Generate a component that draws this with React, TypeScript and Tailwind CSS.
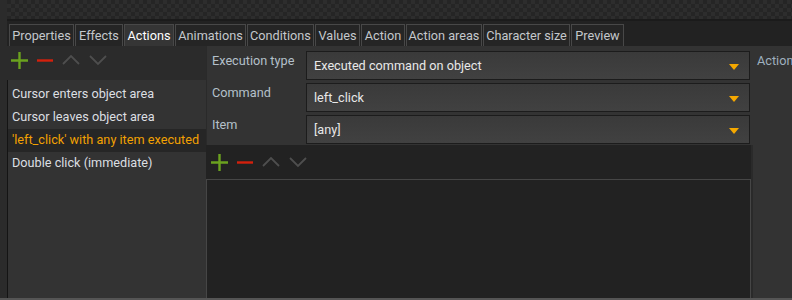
import React from "react";

const tabs = [
  { label: "Properties", w: "w-[65px]" },
  { label: "Effects", w: "w-[48px]" },
  { label: "Actions", w: "w-[50px]", active: true },
  { label: "Animations", w: "w-[71px]" },
  { label: "Conditions", w: "w-[67px]" },
  { label: "Values", w: "w-[45px]" },
  { label: "Action", w: "w-[44px]" },
  { label: "Action areas", w: "w-[76px]" },
  { label: "Character size", w: "w-[87px]" },
  { label: "Preview", w: "w-[53px]" },
];

const events = [
  "Cursor enters object area",
  "Cursor leaves object area",
  "'left_click' with any item executed",
  "Double click (immediate)",
];

const fields = [
  { label: "Execution type", value: "Executed command on object" },
  { label: "Command", value: "left_click" },
  { label: "Item", value: "[any]" },
];

function Toolbar() {
  return (
    <div className="flex items-center gap-[9px]">
      <svg width="17" height="17" viewBox="0 0 17 17">
        <path d="M8.5 0v17M0 8.5h17" stroke="#6ba21f" strokeWidth="2.4" />
      </svg>
      <svg width="16" height="17" viewBox="0 0 16 17">
        <path d="M0 8.5h16" stroke="#d4200c" strokeWidth="2.4" />
      </svg>
      <svg width="18" height="17" viewBox="0 0 18 17">
        <path d="M1 12l8-8 8 8" stroke="#4e4e4e" strokeWidth="1.8" fill="none" />
      </svg>
      <svg width="18" height="17" viewBox="0 0 18 17">
        <path d="M1 4l8 8 8-8" stroke="#4e4e4e" strokeWidth="1.8" fill="none" />
      </svg>
    </div>
  );
}

export default function App() {
  return (
    <div
      className="w-[792px] h-[300px] bg-[#2b2b2b] flex flex-col overflow-hidden text-[12.7px] leading-none"
      style={{ fontFamily: "Roboto, 'Liberation Sans', sans-serif" }}
    >
      <div className="h-[19px] ml-[7px] shrink-0 bg-[image:repeating-conic-gradient(#2d2d2d_0_25%,#252525_0_50%)] bg-size-[8px_8px]" />

      <div className="flex-1 flex flex-col pl-[7px] border-b-2 border-[#555]">
        {/* tabs */}
        <div className="h-[27px] bg-[#222] flex items-end gap-[1px] pl-[2px] pt-[4px] shrink-0 border-t-2 border-[#1b1b1b]">
          {tabs.map(t => (
            <div
              key={t.label}
              className={`${t.w} h-[22px] pt-[2px] flex items-center justify-center border border-b-0 border-[#484848] ${
                t.active ? "bg-[#353535] text-white" : "bg-[#252525] text-[#c4c8cc]"
              }`}
            >
              {t.label}
            </div>
          ))}
        </div>

        <div className="flex-1 flex min-h-0">
          {/* events list */}
          <div className="w-[199px] flex flex-col shrink-0">
            <div className="h-[34px] bg-[#2b2b2b] flex items-start pt-[6px] pl-[4px] shrink-0">
              <Toolbar />
            </div>
            <div className="flex-1 bg-[#333] border-l border-[#141414] pt-[3px]">
              {events.map((e, i) => (
                <div
                  key={e}
                  className={`h-[23px] flex items-center pl-[4px] whitespace-nowrap ${
                    i === 2 ? "bg-[#262626] text-[#f2a102]" : "text-[#dcdfe2]"
                  }`}
                >
                  {e}
                </div>
              ))}
            </div>
          </div>

          {/* action editor */}
          <div className="w-[547px] flex flex-col shrink-0 bg-[#2a2a2a]">
            <div className="flex flex-col gap-[3px] pt-[5px] pb-[1px] pr-[3px] bg-[#333] ml-[1px]">
              {fields.map(f => (
                <div key={f.label} className="flex h-[29px]">
                  <div className="w-[99px] pl-[5px] pt-[4px] text-[#b4c0ca] shrink-0">{f.label}</div>
                  <div className="flex-1 flex items-center justify-between pl-[7px] pr-[10px] pt-[2px] border border-[#1c1c1c] bg-[linear-gradient(#3a3a3a,#414141)] text-[#e8e8e8]">
                    <span>{f.value}</span>
                    <svg width="10" height="6" viewBox="0 0 10 6">
                      <path d="M0 0h10L5 6z" fill="#f5a800" />
                    </svg>
                  </div>
                </div>
              ))}
            </div>
            <div className="flex-1 flex flex-col bg-[#222] mr-[2px]">
              <div className="h-[34px] flex items-center pl-[5px] shrink-0">
                <Toolbar />
              </div>
              <div className="flex-1 border border-b-0 border-[#464646] bg-[#222]" />
            </div>
          </div>

          {/* right panel */}
          <div className="flex-1 bg-[#333] pl-[4px] pt-[9px] text-[#9fb0bf] whitespace-nowrap overflow-hidden">
            Action
          </div>
        </div>
      </div>
    </div>
  );
}
